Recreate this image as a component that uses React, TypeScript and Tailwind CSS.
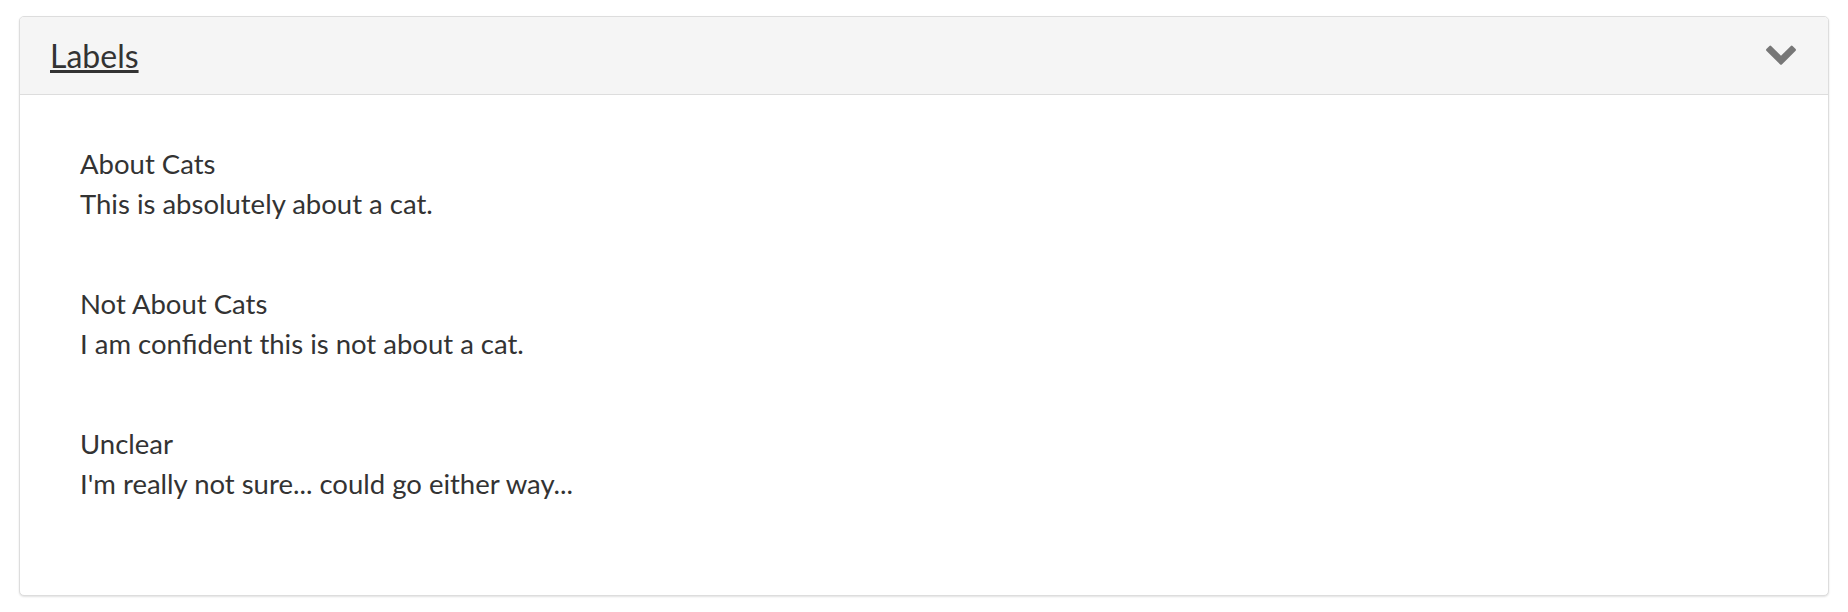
import React from "react";

const items = [
  { title: "About Cats", desc: "This is absolutely about a cat." },
  { title: "Not About Cats", desc: "I am confident this is not about a cat." },
  { title: "Unclear", desc: "I'm really not sure... could go either way..." },
];

export default function App() {
  return (
    <div
      className="min-h-[612px] bg-white pt-[16px] px-[19px] text-[#333]"
      style={{ fontFamily: "Lato, 'Noto Sans', sans-serif" }}
    >
      <div className="rounded-[5px] border border-[#dddddd] bg-white shadow-[0_1px_2px_rgba(0,0,0,0.12)]">
        <div className="flex items-center justify-between rounded-t-[4px] border-b border-[#dddddd] bg-[#f5f5f5] pl-[30px] pr-[32px] py-[21px]">
          <a href="#" className="text-[32px] leading-[1.1] text-[#333] underline">
            Labels
          </a>
          <svg
            width="30"
            height="20"
            viewBox="90 514 1612 1054"
            className="mt-[-2px]"
            aria-hidden="true"
          >
            <path
              fill="#777777"
              d="M1683 808l-742 741q-19 19-45 19t-45-19l-742-741q-19-19-19-45.5t19-45.5l166-165q19-19 45-19t45 19l531 531 531-531q19-19 45-19t45 19l166 165q19 19 19 45.5t-19 45.5z"
            />
          </svg>
        </div>
        <div className="flex flex-col gap-[60px] pl-[60px] pr-[30px] pt-[49px] pb-[91px] text-[27.5px] leading-[40px]">
          {items.map((it) => (
            <div key={it.title}>
              <div>{it.title}</div>
              <div>{it.desc}</div>
            </div>
          ))}
        </div>
      </div>
    </div>
  );
}
